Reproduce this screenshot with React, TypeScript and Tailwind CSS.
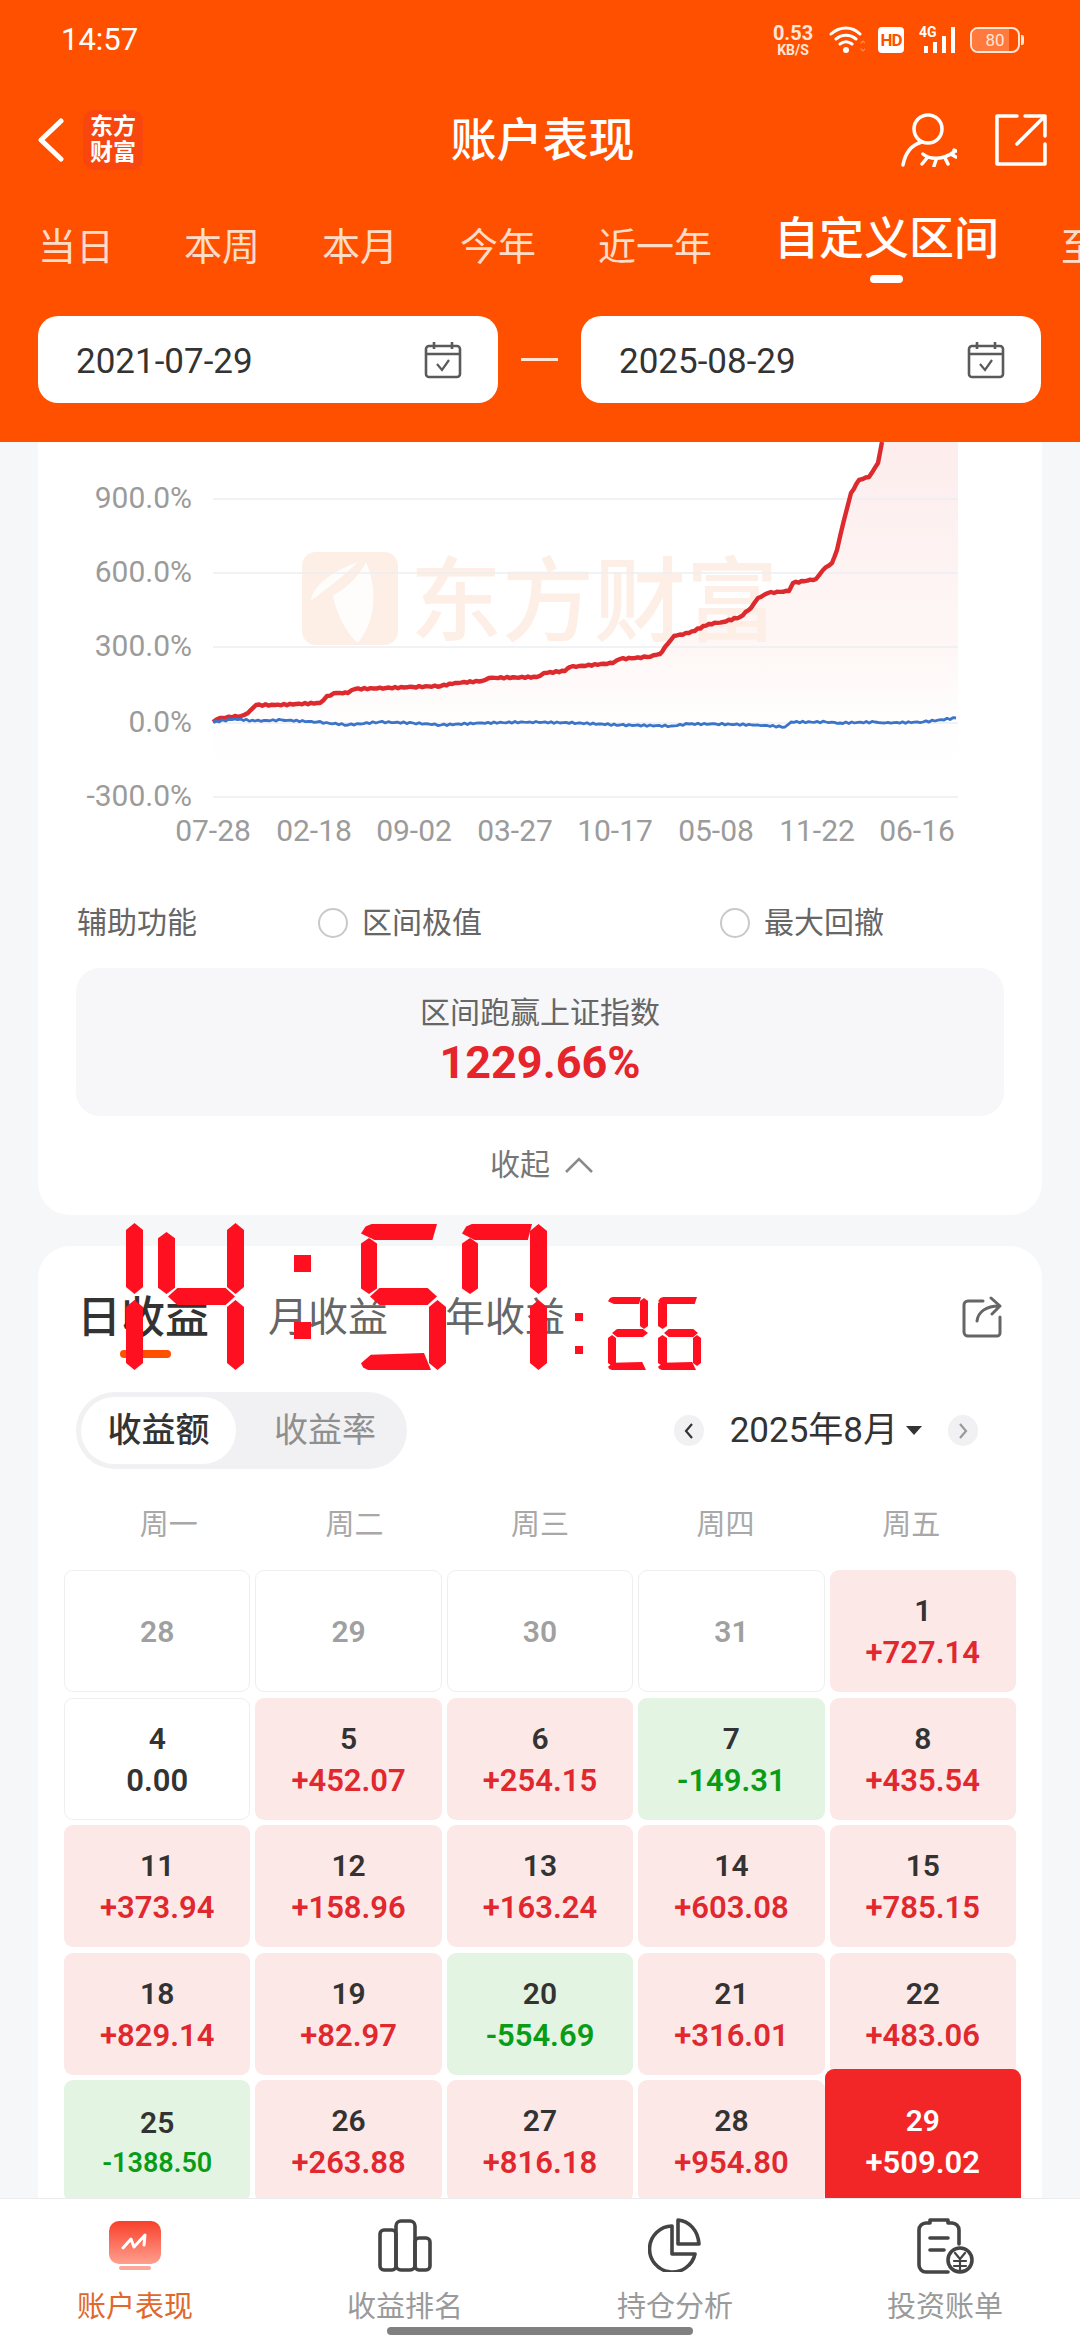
const redPoints: [number, number][] = [
  [213, 722], [220, 718], [241, 716], [248, 713], [256, 705], [275, 705], [320, 703], [327, 696], [337, 693], [348, 693],
  [355, 689], [386, 688], [413, 687], [441, 686], [455, 683], [482, 681], [489, 678], [537, 677], [544, 673], [565, 671],
  [570, 667], [613, 663], [620, 659], [647, 657], [660, 654], [665, 647], [674, 636], [689, 633], [709, 624], [723, 622],
  [740, 617], [751, 608], [758, 598], [768, 593], [789, 591], [793, 583], [816, 579], [823, 570], [832, 563], [837, 550],
  [844, 520], [851, 493], [859, 480], [869, 477], [878, 463], [882, 442],
];

const bluePoints: [number, number][] = [
  [213, 722], [235, 719], [255, 721], [282, 720], [317, 722], [348, 725], [379, 722], [413, 723], [441, 725], [482, 723],
  [530, 722], [578, 723], [620, 725], [671, 726], [689, 724], [716, 724], [758, 725], [785, 727], [791, 722], [826, 722],
  [840, 723], [875, 722], [885, 723], [923, 722], [956, 718],
];

// small wobble so the lines read like daily data rather than straight segments
function jagged(points: [number, number][], amp: number) {
  let d = `M${points[0][0]} ${points[0][1]}`;
  for (let i = 1; i < points.length; i++) {
    const [x0, y0] = points[i - 1];
    const [x1, y1] = points[i];
    const steps = Math.max(1, Math.round(Math.abs(x1 - x0) / 3));
    for (let s = 1; s <= steps; s++) {
      const t = s / steps;
      const wobble = s === steps ? 0 : Math.sin(x0 * 7.3 + s * 2.7) * amp;
      d += `L${(x0 + (x1 - x0) * t).toFixed(1)} ${(y0 + (y1 - y0) * t + wobble).toFixed(1)}`;
    }
  }
  return d;
}

const yLabels: [string, number][] = [["900.0%", 499], ["600.0%", 573], ["300.0%", 647], ["0.0%", 723], ["-300.0%", 797]];
const xLabels: [string, number][] = [
  ["07-28", 213], ["02-18", 314], ["09-02", 414], ["03-27", 515], ["10-17", 615], ["05-08", 716], ["11-22", 817], ["06-16", 917],
];

type Day = { day: number; value?: string; kind: "muted" | "flat" | "up" | "down" | "today" };

const days: Day[] = [
  { day: 28, kind: "muted" }, { day: 29, kind: "muted" }, { day: 30, kind: "muted" }, { day: 31, kind: "muted" },
  { day: 1, value: "+727.14", kind: "up" },
  { day: 4, value: "0.00", kind: "flat" }, { day: 5, value: "+452.07", kind: "up" }, { day: 6, value: "+254.15", kind: "up" },
  { day: 7, value: "-149.31", kind: "down" }, { day: 8, value: "+435.54", kind: "up" },
  { day: 11, value: "+373.94", kind: "up" }, { day: 12, value: "+158.96", kind: "up" }, { day: 13, value: "+163.24", kind: "up" },
  { day: 14, value: "+603.08", kind: "up" }, { day: 15, value: "+785.15", kind: "up" },
  { day: 18, value: "+829.14", kind: "up" }, { day: 19, value: "+82.97", kind: "up" }, { day: 20, value: "-554.69", kind: "down" },
  { day: 21, value: "+316.01", kind: "up" }, { day: 22, value: "+483.06", kind: "up" },
  { day: 25, value: "-1388.50", kind: "down" }, { day: 26, value: "+263.88", kind: "up" }, { day: 27, value: "+816.18", kind: "up" },
  { day: 28, value: "+954.80", kind: "up" }, { day: 29, value: "+509.02", kind: "today" },
];

function CalendarIcon() {
  return (
    <svg width="38" height="38" viewBox="0 0 38 38" fill="none" stroke="#5a5a5a" strokeWidth="2.6">
      <rect x="2" y="5" width="34" height="31" rx="3" />
      <path d="M2 13h34M10 1v7M28 1v7" />
      <path d="M13 23l5 6 7-10" strokeWidth="2.2" />
    </svg>
  );
}

function DateBox({ value }: { value: string }) {
  return (
    <div className="w-[460px] h-[87px] bg-white rounded-[20px] flex items-center justify-between pl-[38px] pr-[36px]">
      <span className="pt-[5px] text-[35px] text-[#333]">{value}</span>
      <CalendarIcon />
    </div>
  );
}

function StatusBar() {
  return (
    <div className="h-[80px] flex items-center justify-between pl-[61px] pr-[56px] text-white">
      <span className="text-[31px]">14:57</span>
      <div className="flex items-center">
        <div className="flex flex-col items-center w-[42px] font-bold text-[#ffe6d6]">
          <span className="text-[20px] leading-[20px]">0.53</span>
          <span className="text-[14px] leading-[14px]">KB/S</span>
        </div>
        <svg className="ml-[15px]" width="36" height="28" viewBox="0 0 36 28" fill="none" stroke="#fff" strokeWidth="3" strokeLinecap="round">
          <path d="M2 8C11 0 23 0 31 8M7 13C13 8 21 8 27 13M11 18c4-3 8-3 12 0" />
          <circle cx="17" cy="24" r="3" fill="#fff" stroke="none" />
          <path d="M32 17l2-2 2 2M32 23l2 2 2-2" stroke="#ff8a50" strokeWidth="1.2" />
        </svg>
        <span className="ml-[13px] w-[26px] h-[26px] rounded-[4px] bg-white text-[#ff5000] text-[17px] leading-[26px] font-bold text-center tracking-[-1px]">HD</span>
        <div className="ml-[15px] relative w-[38px] h-[26px]">
          <span className="absolute left-0 -top-[2px] text-[14px] leading-[14px] font-bold">4G</span>
          <svg className="absolute left-0 top-0" width="38" height="26" viewBox="0 0 38 26" fill="#fff">
            <rect x="5" y="19" width="4" height="7" />
            <rect x="14" y="15" width="4" height="11" />
            <rect x="23" y="9" width="4" height="17" />
            <rect x="32" y="0" width="4" height="26" />
          </svg>
        </div>
        <div className="ml-[13px] relative w-[50px] h-[26px] rounded-[8px] border-[2px] border-[#ffe6d6] flex items-center justify-center overflow-hidden">
          <div className="absolute left-0 top-0 bottom-0 w-[80%] bg-[#ff7a3c]" />
          <span className="relative text-[17px] leading-none text-[#ffe6d6]">80</span>
        </div>
        <div className="ml-[1px] w-[3px] h-[10px] bg-[#ffe6d6] rounded-r-[2px]" />
      </div>
    </div>
  );
}

function Header() {
  const tabs = ["本周", "本月", "今年", "近一年"];
  return (
    <div className="bg-[#ff5000] shrink-0 h-[442px] overflow-hidden">
      <StatusBar />
      <div className="h-[120px] flex items-center pl-[38px] pr-[33px]">
        <div className="flex-1 flex items-center">
          <svg width="26" height="44" viewBox="0 0 26 44" fill="none" stroke="#fff" strokeWidth="5" strokeLinecap="round" strokeLinejoin="round">
            <path d="M23 3L3 22l20 19" />
          </svg>
          <div className="ml-[19px] w-[60px] h-[60px] rounded-[12px] bg-[#f8460e] flex items-center justify-center text-white text-[23px] leading-[26px] font-bold text-center">
            东方
            <br />
            财富
          </div>
        </div>
        <h1 className="text-[46px] leading-none font-medium text-white">账户表现</h1>
        <div className="flex-1 flex items-center justify-end">
          <svg width="56" height="54" viewBox="0 0 56 54" fill="none" stroke="#fff" strokeWidth="3.5" strokeLinecap="round">
            <circle cx="27" cy="16" r="14" />
            <path d="M21 29C10 32 4 41 2 52" />
            <path d="M22 41c7 6 20 6 31-2M26 45l-5 6M35 47l-2 6M44 45l3 6M50 41l5 3M53 37l2 1" />
          </svg>
          <svg className="ml-[38px]" width="52" height="52" viewBox="0 0 52 52" fill="none" stroke="#fff" strokeWidth="3.5" strokeLinecap="round" strokeLinejoin="round">
            <path d="M22 2H2v48h48V30" />
            <path d="M22 30L50 2M30 2h20v20" />
          </svg>
        </div>
      </div>
      <div className="h-[94px] pl-[38px] flex items-center gap-x-[62px] whitespace-nowrap overflow-hidden">
        <span className="mr-[8px] text-[38px] leading-none text-[#ffdcc8]">当日</span>
        {tabs.map((t) => (
          <span key={t} className="text-[38px] leading-none text-[#ffdcc8]">{t}</span>
        ))}
        <div className="pt-[4px] flex flex-col items-center">
          <span className="text-[45px] leading-[50px] font-medium text-white">自定义区间</span>
          <span className="mt-[10px] w-[33px] h-[8px] rounded-full bg-white" />
        </div>
        <span className="text-[38px] leading-none text-[#ffdcc8]">至今</span>
      </div>
      <div className="mt-[22px] px-[38px] flex items-center">
        <DateBox value="2021-07-29" />
        <div className="mx-[23px] w-[37px] h-[3px] bg-[#ffe3d3]" />
        <DateBox value="2025-08-29" />
      </div>
    </div>
  );
}

function Chart() {
  const redPath = jagged(redPoints, 0.7);
  const bluePath = jagged(bluePoints, 0.8);
  return (
    <svg className="block" width="1004" height="430" viewBox="38 442 1004 430">
      <defs>
        <linearGradient id="redFill" x1="0" y1="0" x2="0" y2="1">
          <stop offset="0" stopColor="#fdeded" />
          <stop offset="0.6" stopColor="#fef7f6" />
          <stop offset="1" stopColor="#ffffff" stopOpacity="0" />
        </linearGradient>
      </defs>
      <path d={`${redPath}L958 442L958 790L213 790Z`} fill="url(#redFill)" />
      <g fill="#fdeee6">
        <rect x="302" y="552" width="96" height="93" rx="14" />
        <text x="410" y="634" fontSize="92" fontWeight="500">东方财富</text>
      </g>
      <g fill="#fff" opacity="0.9">
        <path d="M311 601C312 585 335 570 358 562 345 575 325 590 311 601Z" />
        <path d="M366 562C378 590 376 620 358 643 345 632 335 610 333 595 345 590 360 575 366 562Z" />
      </g>
      {yLabels.map(([label, y]) => (
        <g key={label}>
          <line x1="213" x2="958" y1={y} y2={y} stroke="#eceef2" strokeWidth="1.5" />
          <text x="192" y={y + 9} textAnchor="end" fontSize="30" fill="#9b9b9b">{label}</text>
        </g>
      ))}
      {xLabels.map(([label, x]) => (
        <text key={label} x={x} y="841" textAnchor="middle" fontSize="30" fill="#9b9b9b">{label}</text>
      ))}
      <path d={redPath} fill="none" stroke="#dc2a2e" strokeWidth="4.4" strokeLinejoin="round" />
      <path d={bluePath} fill="none" stroke="#3b74c9" strokeWidth="2.8" strokeLinejoin="round" />
    </svg>
  );
}

function Radio({ label, className }: { label: string; className: string }) {
  return (
    <div className={`flex items-center ${className}`}>
      <span className="w-[30px] h-[30px] rounded-full border-[2px] border-[#c9c9c9]" />
      <span className="ml-[14px] text-[30px] leading-none text-[#666]">{label}</span>
    </div>
  );
}

function SummaryCard() {
  return (
    <div className="bg-white rounded-b-[32px] h-[773px]">
      <Chart />
      <div className="mt-[36px] pl-[39px] h-[30px] flex items-center">
        <span className="w-[241px] text-[30px] leading-none text-[#666]">辅助功能</span>
        <Radio label="区间极值" className="w-[402px]" />
        <Radio label="最大回撤" className="" />
      </div>
      <div className="mt-[30px] mx-[38px] h-[148px] rounded-[24px] bg-[#f7f7f9] flex flex-col items-center justify-center">
        <span className="text-[30px] leading-[42px] text-[#666]">区间跑赢上证指数</span>
        <span className="mt-[3px] mb-[3px] text-[45px] leading-[52px] font-bold text-[#e6242c]">1229.66%</span>
      </div>
      <div className="mt-[31px] pl-[4px] flex items-center justify-center">
        <span className="text-[30px] leading-[36px] text-[#777]">收起</span>
        <svg className="ml-[14px]" width="30" height="18" viewBox="0 0 30 18" fill="none" stroke="#8a8a8a" strokeWidth="2.6">
          <path d="M2 16L15 3l13 13" />
        </svg>
      </div>
    </div>
  );
}

function DayCell({ d }: { d: Day }) {
  const tones = {
    muted: "bg-white border-[1.5px] border-[#efefef]",
    flat: "bg-white border-[1.5px] border-[#efefef]",
    up: "bg-[#fde8e8]",
    down: "bg-[#e3f4e3]",
    today: "",
  };
  const valueTone = {
    muted: "",
    flat: "text-[#333]",
    up: "text-[#e0282e]",
    down: "text-[#0a9c17]",
    today: "text-white",
  };
  const small = d.value === "-1388.50";
  return (
    <div className={`relative h-[122px] pt-[2px] rounded-[9px] flex flex-col items-center justify-center font-semibold ${tones[d.kind]}`}>
      {d.kind === "today" && <div className="absolute -top-[11px] -left-[5px] -right-[5px] h-[140px] rounded-[9px] bg-[#f22626]" />}
      <span className={`relative text-[30px] leading-[42px] ${d.kind === "muted" ? "text-[#a0a0a0]" : d.kind === "today" ? "text-white" : "text-[#333]"}`}>{d.day}</span>
      {d.value && (
        <span className={`relative ${small ? "text-[27px] leading-[38px]" : "text-[31px] leading-[42px]"} ${valueTone[d.kind]}`}>{d.value}</span>
      )}
    </div>
  );
}

function IncomeCard() {
  return (
    <div className="mt-[31px] bg-white rounded-t-[32px] pt-[50px]">
      <div className="pl-[39px] pr-[40px] flex items-start">
        <div className="relative w-[136px] h-[44px]">
          <span className="block text-[44px] leading-[44px] font-medium text-[#333]">日收益</span>
          <span className="absolute left-[43px] top-[54px] w-[51px] h-[8px] rounded-full bg-[#ff5000]" />
        </div>
        <span className="ml-[55px] text-[40px] leading-[44px] text-[#666]">月收益</span>
        <span className="ml-[57px] text-[40px] leading-[44px] text-[#666]">年收益</span>
        <svg className="ml-auto" width="40" height="42" viewBox="0 0 40 42" fill="none" stroke="#666" strokeWidth="3" strokeLinecap="round" strokeLinejoin="round">
          <path d="M21 5H6a4 4 0 0 0-4 4v27a4 4 0 0 0 4 4h29a3 3 0 0 0 3-3V21" />
          <path d="M15 25c1-9 9-15 22-15M29 2l9 8-8 8" />
        </svg>
      </div>
      <div className="mt-[52px] pl-[38px] pr-[64px] flex items-center">
        <div className="w-[331px] h-[77px] rounded-full bg-[#f1f1f3] p-[5px] flex items-center">
          <span className="w-[155px] h-[67px] rounded-full bg-white flex items-center justify-center text-[34px] font-medium text-[#333]">收益额</span>
          <span className="flex-1 pl-[12px] text-center text-[34px] text-[#8f8f8f]">收益率</span>
        </div>
        <button className="ml-auto w-[30px] h-[31px] rounded-full bg-[#f1f1f3] flex items-center justify-center">
          <svg width="10" height="18" viewBox="0 0 10 18" fill="none" stroke="#333" strokeWidth="2.2"><path d="M8 2L2 9l6 7" /></svg>
        </button>
        <span className="ml-[26px] text-[35px] leading-none text-[#333]">2025年8月</span>
        <span className="ml-[8px] w-0 h-0 border-x-[8px] border-x-transparent border-t-[9px] border-t-[#333]" />
        <button className="ml-[26px] w-[30px] h-[31px] rounded-full bg-[#f1f1f3] flex items-center justify-center">
          <svg width="10" height="18" viewBox="0 0 10 18" fill="none" stroke="#999" strokeWidth="2.2"><path d="M2 2l6 7-6 7" /></svg>
        </button>
      </div>
      <div className="mt-[36px] mx-[38px] grid grid-cols-5 text-center text-[29px] leading-[40px] text-[#a8a8a8]">
        {["周一", "周二", "周三", "周四", "周五"].map((w) => (
          <span key={w}>{w}</span>
        ))}
      </div>
      <div className="mt-[25px] mx-[26px] grid grid-cols-5 gap-x-[5px] gap-y-[5.5px]">
        {days.map((d, i) => (
          <DayCell key={i} d={d} />
        ))}
      </div>
    </div>
  );
}

function BottomNav() {
  return (
    <div className="relative z-10 shrink-0 h-[142px] bg-white border-t border-[#ececec] grid grid-cols-4 text-[29px] text-[#9a9a9a]">
      <div className="flex flex-col items-center pt-[19px]">
        <svg width="54" height="54" viewBox="0 0 54 54" fill="none">
          <defs>
            <linearGradient id="tile" x1="0" y1="0" x2="0" y2="1">
              <stop offset="0" stopColor="#f8402a" />
              <stop offset="1" stopColor="#ff9f8e" />
            </linearGradient>
          </defs>
          <rect x="1" y="3" width="52" height="43" rx="10" fill="url(#tile)" />
          <rect x="11" y="48" width="32" height="4" rx="2" fill="#f9a899" />
          <path d="M15 30l8-9 3 8 11-12-1 10" stroke="#fff" strokeWidth="3" strokeLinecap="round" strokeLinejoin="round" />
        </svg>
        <span className="mt-[17px] leading-[36px] text-[#e1682c]">账户表现</span>
      </div>
      <div className="flex flex-col items-center pt-[19px]">
        <svg width="54" height="54" viewBox="0 0 54 54" fill="none" stroke="#444" strokeWidth="3.6" strokeLinejoin="round">
          <rect x="2" y="12" width="16" height="40" rx="4" />
          <rect x="18" y="3" width="19" height="49" rx="5" />
          <rect x="37" y="20" width="15" height="32" rx="4" />
        </svg>
        <span className="mt-[17px] leading-[36px]">收益排名</span>
      </div>
      <div className="flex flex-col items-center pt-[19px]">
        <svg width="54" height="54" viewBox="0 0 54 54" fill="none" stroke="#444" strokeWidth="3.6" strokeLinejoin="round">
          <path d="M24 8a23 23 0 1 0 23 28H24z" />
          <path d="M30 2c11 1 20 10 21 24H30z" />
        </svg>
        <span className="mt-[17px] leading-[36px]">持仓分析</span>
      </div>
      <div className="flex flex-col items-center pt-[19px]">
        <svg width="58" height="56" viewBox="0 0 58 56" fill="none" stroke="#444" strokeWidth="3.6" strokeLinejoin="round" strokeLinecap="round">
          <path d="M32 54H10a7 7 0 0 1-7-7V12a7 7 0 0 1 7-7h4V2h18v3h4a7 7 0 0 1 7 7v14" />
          <path d="M14 20h18M14 32h14" />
          <circle cx="44" cy="42" r="12" fill="#fff" />
          <path d="M39 35l5 6 5-6M38 43h12M38 48h12M44 41v11" strokeWidth="2.2" />
        </svg>
        <span className="mt-[15px] leading-[36px]">投资账单</span>
      </div>
      <div className="absolute left-[387px] bottom-[5px] w-[306px] h-[8px] rounded-full bg-[#808080]" />
    </div>
  );
}

// shapes for the seven-segment clock that floats over the page
const segV = "[clip-path:polygon(50%_0,100%_10%,100%_90%,50%_100%,0_90%,0_10%)]";
const segH = "[clip-path:polygon(14%_0,86%_0,100%_50%,86%_100%,14%_100%,0_50%)]";
const segT = "[clip-path:polygon(0_60%,6%_15%,14%_0,100%_0,94%_100%,18%_100%)]";
const segB = "[clip-path:polygon(0_60%,14%_10%,90%_0,100%_100%,10%_100%,3%_85%)]";

function ClockOverlay() {
  const segments = [
    // 1
    `left-[126px] top-[1223px] w-[17px] h-[71px] ${segV}`,
    `left-[126px] top-[1300px] w-[17px] h-[70px] ${segV}`,
    // 4
    `left-[158px] top-[1232px] w-[17px] h-[62px] ${segV}`,
    `left-[168px] top-[1288px] w-[67px] h-[17px] ${segH}`,
    `left-[227px] top-[1223px] w-[17px] h-[71px] ${segV}`,
    `left-[227px] top-[1300px] w-[17px] h-[70px] ${segV}`,
    // colon
    `left-[294px] top-[1255px] w-[17px] h-[17px]`,
    `left-[294px] top-[1322px] w-[17px] h-[17px]`,
    // 5
    `left-[361px] top-[1224px] w-[76px] h-[16px] ${segT}`,
    `left-[361px] top-[1238px] w-[16px] h-[56px] ${segV}`,
    `left-[370px] top-[1288px] w-[67px] h-[17px] ${segH}`,
    `left-[429px] top-[1300px] w-[17px] h-[70px] ${segV}`,
    `left-[361px] top-[1353px] w-[70px] h-[17px] ${segB}`,
    // 7
    `left-[462px] top-[1224px] w-[70px] h-[16px] ${segT}`,
    `left-[462px] top-[1238px] w-[16px] h-[56px] ${segV}`,
    `left-[530px] top-[1224px] w-[17px] h-[70px] ${segV}`,
    `left-[530px] top-[1300px] w-[17px] h-[70px] ${segV}`,
    // small colon
    `left-[575px] top-[1313px] w-[8px] h-[8px]`,
    `left-[575px] top-[1346px] w-[8px] h-[8px]`,
    // 2
    `left-[608px] top-[1297px] w-[33px] h-[7px] ${segT}`,
    `left-[640px] top-[1298px] w-[8px] h-[31px] ${segV}`,
    `left-[612px] top-[1329px] w-[36px] h-[8px] ${segH}`,
    `left-[608px] top-[1335px] w-[8px] h-[31px] ${segV}`,
    `left-[608px] top-[1362px] w-[38px] h-[8px] ${segB}`,
    // 6
    `left-[658px] top-[1297px] w-[39px] h-[7px] ${segT}`,
    `left-[658px] top-[1300px] w-[9px] h-[29px] ${segV}`,
    `left-[664px] top-[1329px] w-[34px] h-[8px] ${segH}`,
    `left-[658px] top-[1335px] w-[9px] h-[31px] ${segV}`,
    `left-[693px] top-[1335px] w-[8px] h-[31px] ${segV}`,
    `left-[658px] top-[1362px] w-[38px] h-[8px] ${segB}`,
  ];
  return (
    <div className="absolute inset-0 pointer-events-none z-20">
      <span className="sr-only">14:57:26</span>
      {segments.map((s, i) => (
        <span key={i} aria-hidden="true" className={`absolute bg-[#ff1020] ${s}`} />
      ))}
    </div>
  );
}

export default function App() {
  return (
    <div className="relative w-[1080px] h-[2340px] flex flex-col overflow-hidden bg-[#f6f7f9] font-['Roboto','Noto_Sans_CJK_SC',sans-serif]">
      <Header />
      <div className="flex-1 min-h-0 overflow-hidden px-[38px]">
        <SummaryCard />
        <IncomeCard />
      </div>
      <BottomNav />
      <ClockOverlay />
    </div>
  );
}
